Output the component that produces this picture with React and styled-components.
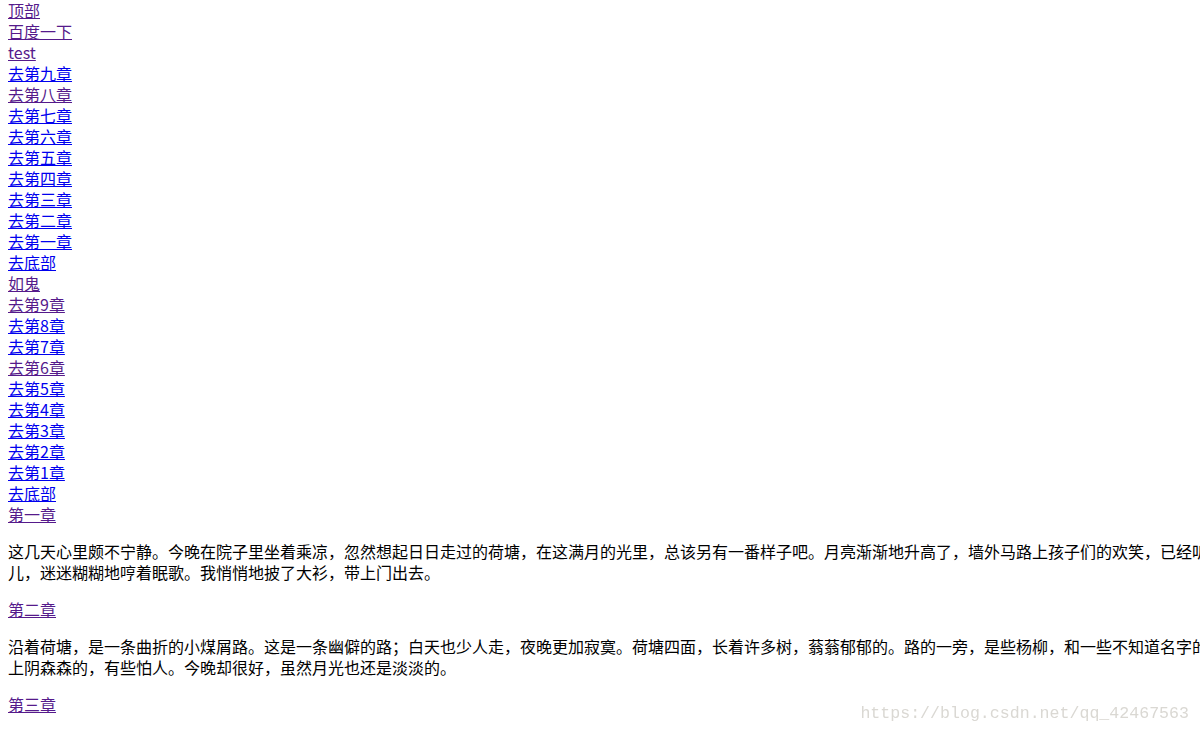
import styled, { createGlobalStyle } from "styled-components";

const GlobalStyle = createGlobalStyle`
   html, body {
      margin: 0;
      background: #fff;
      overflow: hidden;
   }
   body {
      padding: 0 8px;
      font-family: "Noto Sans CJK SC", sans-serif;
      font-size: 16px;
      line-height: 21px;
      color: #000;
   }
`;

const Page = styled.div`
   width: 1400px;
`;

const LinkList = styled.nav`
   display: flex;
   flex-direction: column;
   align-items: flex-start;
`;

const Link = styled.a`
   color: ${({ $visited }) => ($visited ? "#551a8b" : "#0000ee")};
   text-decoration: underline;
   cursor: pointer;
`;

const Chapter = styled.section`
   p {
      margin: 16px 0;
   }
`;

const Watermark = styled.div`
   position: fixed;
   right: 11px;
   bottom: 10px;
   font-family: "Liberation Mono", monospace;
   font-size: 16.6px;
   line-height: 20px;
   color: #dad8d3;
   pointer-events: none;
`;

const links = [
   { text: "顶部", visited: true },
   { text: "百度一下", visited: true },
   { text: "test", visited: true },
   { text: "去第九章" },
   { text: "去第八章", visited: true },
   { text: "去第七章" },
   { text: "去第六章" },
   { text: "去第五章" },
   { text: "去第四章" },
   { text: "去第三章" },
   { text: "去第二章" },
   { text: "去第一章" },
   { text: "去底部" },
   { text: "如鬼", visited: true },
   { text: "去第9章", visited: true },
   { text: "去第8章" },
   { text: "去第7章" },
   { text: "去第6章", visited: true },
   { text: "去第5章" },
   { text: "去第4章" },
   { text: "去第3章" },
   { text: "去第2章" },
   { text: "去第1章" },
   { text: "去底部" },
   { text: "第一章", visited: true },
];

const chapters = [
   {
      text: "这几天心里颇不宁静。今晚在院子里坐着乘凉，忽然想起日日走过的荷塘，在这满月的光里，总该另有一番样子吧。月亮渐渐地升高了，墙外马路上孩子们的欢笑，已经听不见了；妻在屋里拍着闰儿，迷迷糊糊地哼着眠歌。我悄悄地披了大衫，带上门出去。",
      next: "第二章",
   },
   {
      text: "沿着荷塘，是一条曲折的小煤屑路。这是一条幽僻的路；白天也少人走，夜晚更加寂寞。荷塘四面，长着许多树，蓊蓊郁郁的。路的一旁，是些杨柳，和一些不知道名字的树。没有月光的晚上，这路上阴森森的，有些怕人。今晚却很好，虽然月光也还是淡淡的。",
      next: "第三章",
   },
];

const App = () => {
   return (
      <>
         <GlobalStyle />
         <Page>
            <LinkList>
               {links.map((l, i) => (
                  <Link key={i} $visited={l.visited}>{l.text}</Link>
               ))}
            </LinkList>
            {chapters.map((c, i) => (
               <Chapter key={i}>
                  <p>{c.text}</p>
                  <p><Link $visited>{c.next}</Link></p>
               </Chapter>
            ))}
         </Page>
         <Watermark>https://blog.csdn.net/qq_42467563</Watermark>
      </>
   )
};

export default App;
